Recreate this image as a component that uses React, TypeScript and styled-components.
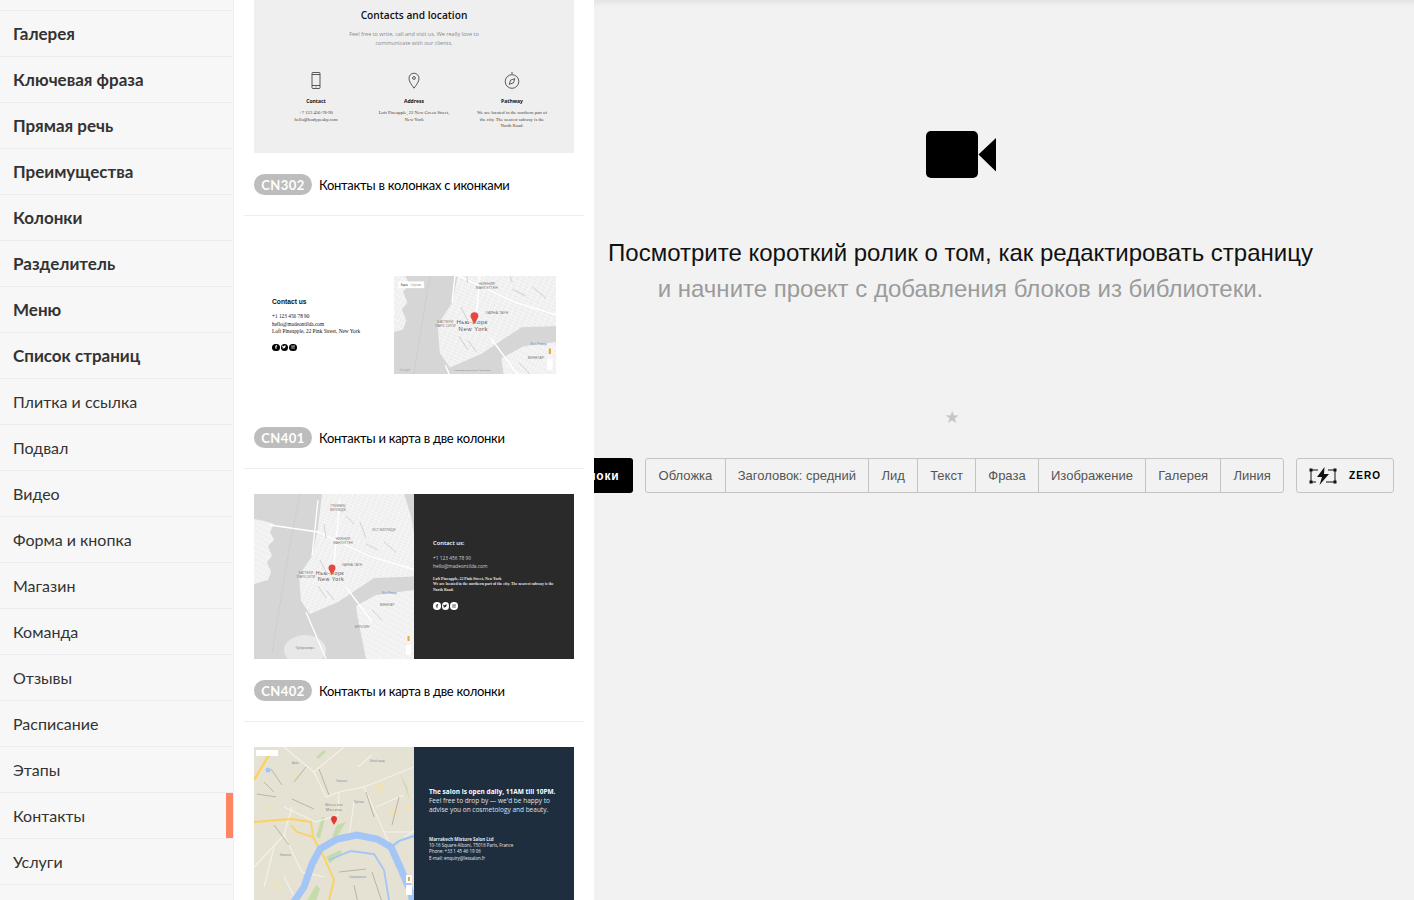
import * as React from "react";
import styled, { createGlobalStyle } from "styled-components";
import { FaFacebookF, FaTwitter, FaInstagram } from "react-icons/fa";

const futura = `"Lato", "Noto Sans", sans-serif`;
const arial = `"Liberation Sans", Arial, sans-serif`;
const serif = `"Liberation Serif", Georgia, serif`;
const openSans = `"Open Sans", sans-serif`;

const GlobalStyle = createGlobalStyle`
  html, body {
    margin: 0;
    height: 100%;
    overflow: hidden;
  }
  #root {
    height: 100%;
  }
`;

const Page = styled.div`
  display: flex;
  height: 900px;
  overflow: hidden;
  background: #fff;
`;

const Sidebar = styled.nav`
  width: 233px;
  flex-shrink: 0;
  background: #f7f7f7;
  border-right: 1px solid #eeeeee;
`;

const SidebarTop = styled.div`
  height: 10px;
  border-bottom: 1px solid #ececec;
`;

const SidebarRow = styled.div<{ $bold?: boolean; $active?: boolean }>`
  position: relative;
  box-sizing: border-box;
  height: 46px;
  display: flex;
  align-items: center;
  padding-left: 13px;
  border-bottom: 1px solid #ececec;
  font-family: ${futura};
  font-size: ${(p) => (p.$bold ? "17px" : "16px")};
  font-weight: ${(p) => (p.$bold ? 700 : 400)};
  color: #333;
  ${(p) =>
    p.$active &&
    `&::after {
      content: "";
      position: absolute;
      top: 0;
      right: 0;
      bottom: 0;
      width: 7px;
      background: #ff8562;
    }`}
`;

const Library = styled.main`
  width: 360px;
  flex-shrink: 0;
  box-sizing: border-box;
  padding: 0 10px;
  background: #fff;
`;

const Card = styled.section<{ $first?: boolean }>`
  padding: ${(p) => (p.$first ? "0" : "25px")} 10px 20px;
  border-bottom: 1px solid #eeeeee;
`;

const Caption = styled.div`
  display: flex;
  align-items: center;
  gap: 7px;
  margin-top: 21px;
  height: 21px;
`;

const Pill = styled.span`
  width: 58px;
  height: 21px;
  border-radius: 11px;
  background: #bdbdbd;
  color: #fff;
  font-family: ${futura};
  font-size: 13px;
  font-weight: 700;
  letter-spacing: 0.5px;
  display: flex;
  align-items: center;
  justify-content: center;
`;

const CaptionText = styled.span`
  font-family: ${futura};
  font-size: 13px;
  letter-spacing: -0.27px;
  color: #000;
`;

const ContactsPreview = styled.div`
  box-sizing: border-box;
  height: 153px;
  background: #efefef;
  padding-top: 9px;
  text-align: center;
  color: #111;
`;

const PreviewTitle = styled.div`
  font-family: ${openSans};
  font-size: 10.2px;
  font-weight: 600;
  line-height: 12px;
`;

const PreviewLead = styled.div`
  margin-top: 9px;
  font-family: ${openSans};
  font-size: 5.5px;
  line-height: 9px;
  color: #8a8a8a;
`;

const IconColumns = styled.div`
  display: grid;
  grid-template-columns: repeat(3, 98px);
  justify-content: center;
  margin-top: 24px;
`;

const IconColumn = styled.div`
  display: flex;
  flex-direction: column;
  align-items: center;
`;

const ColumnTitle = styled.div`
  margin-top: 8px;
  font-family: ${openSans};
  font-size: 5px;
  font-weight: 700;
  line-height: 8px;
`;

const ColumnText = styled.div`
  margin-top: 5px;
  width: 78px;
  font-family: ${serif};
  font-size: 4.7px;
  line-height: 6.7px;
  color: #444;
`;

const SplitPreview = styled.div<{ $bg?: string }>`
  height: 165px;
  display: grid;
  grid-template-columns: 160px 160px;
  background: ${(p) => p.$bg || "#fff"};
  overflow: hidden;
`;

const MapPane = styled.div`
  height: 165px;
`;

const TwoColPreview = styled.div`
  height: 165px;
  display: flex;
  align-items: center;
  justify-content: space-between;
  padding: 2px 18px 0;
  box-sizing: border-box;
`;

const SmallMap = styled.div`
  width: 162px;
  height: 98px;
  flex-shrink: 0;
`;

const InfoBlock = styled.div`
  color: #111;
`;

const InfoTitle = styled.div`
  font-family: ${arial};
  font-size: 6.7px;
  font-weight: 700;
  line-height: 8px;
`;

const InfoLine = styled.div`
  margin-top: 7px;
  font-family: ${serif};
  font-size: 5.3px;
  line-height: 7.5px;
`;

const Socials = styled.div<{ $light?: boolean }>`
  display: flex;
  gap: 1px;
  margin-top: 8px;
  & > span {
    width: 7.5px;
    height: 7.5px;
    border-radius: 50%;
    background: ${(p) => (p.$light ? "#fff" : "#000")};
    color: ${(p) => (p.$light ? "#2a2a2a" : "#fff")};
    display: flex;
    align-items: center;
    justify-content: center;
    font-size: 4px;
  }
`;

const DarkPane = styled.div`
  padding: 45px 19px 0;
  color: #fff;
`;

const DarkTitle = styled.div`
  font-family: ${openSans};
  font-size: 5.8px;
  font-weight: 600;
  line-height: 8px;
`;

const DarkSans = styled.div`
  margin-top: 8px;
  font-family: ${openSans};
  font-size: 4.8px;
  line-height: 7.6px;
  color: #cfcfcf;
`;

const DarkSerif = styled.div`
  margin-top: 6.5px;
  font-family: ${serif};
  font-size: 3.9px;
  font-weight: 700;
  line-height: 5.8px;
  color: #e4e4e4;
`;

const NavyPane = styled.div`
  padding: 40px 15px 0 15px;
  color: #fff;
`;

const NavyLead = styled.div`
  font-family: ${openSans};
  font-size: 6.5px;
  line-height: 9.2px;
  color: #dfe3e8;
  & > b {
    color: #fff;
  }
`;

const NavySmall = styled.div`
  margin-top: 21px;
  font-family: ${openSans};
  font-size: 4.45px;
  line-height: 6.3px;
  color: #e4e7ea;
`;

const Workspace = styled.section`
  flex: 1;
  min-width: 0;
  display: flex;
  flex-direction: column;
  overflow: hidden;
  background: #f2f2f2;
  box-shadow: inset 0 10px 10px -10px rgba(0, 0, 0, 0.12);
`;

const Hero = styled.div`
  display: flex;
  flex-direction: column;
  align-items: center;
  padding: 131px 87px 0 0;
`;

const HeroTitle = styled.div`
  margin-top: 57px;
  font-family: ${arial};
  font-size: 24px;
  line-height: 36px;
  color: #111;
  white-space: nowrap;
  text-align: center;
`;

const HeroSub = styled.div`
  font-family: ${arial};
  font-size: 24px;
  line-height: 36px;
  color: #9b9b9b;
  white-space: nowrap;
  text-align: center;
`;

const Star = styled.div`
  margin: 98px 17px 0 0;
  height: 24px;
  font-family: "DejaVu Sans", sans-serif;
  font-size: 17px;
  line-height: 24px;
  color: #c6c6c6;
`;

const Toolbar = styled.div`
  display: flex;
  justify-content: flex-end;
  gap: 12px;
  margin-top: 29px;
  padding-right: 20px;
  height: 35px;
`;

const AllBlocks = styled.div`
  flex-shrink: 0;
  display: flex;
  align-items: center;
  padding: 0 14px;
  background: #000;
  border-radius: 3px;
  color: #fff;
  font-family: ${arial};
  font-size: 12px;
  font-weight: 700;
  letter-spacing: 0.8px;
  white-space: nowrap;
`;

const Segments = styled.div`
  flex-shrink: 0;
  display: flex;
  border: 1px solid #c4c4c4;
  border-radius: 3px;
`;

const Segment = styled.div`
  display: flex;
  align-items: center;
  padding: 0 12.2px;
  border-left: 1px solid #c4c4c4;
  font-family: ${arial};
  font-size: 13px;
  color: #555;
  white-space: nowrap;
  &:first-child {
    border-left: 0;
  }
`;

const ZeroButton = styled.div`
  flex-shrink: 0;
  box-sizing: border-box;
  width: 98px;
  display: flex;
  align-items: center;
  gap: 12px;
  padding-left: 12px;
  border: 1px solid #c4c4c4;
  border-radius: 3px;
  color: #000;
  font-family: ${arial};
  font-size: 10px;
  font-weight: 700;
  letter-spacing: 1.1px;
`;

const sidebarItems = [
  { name: "Галерея", bold: true },
  { name: "Ключевая фраза", bold: true },
  { name: "Прямая речь", bold: true },
  { name: "Преимущества", bold: true },
  { name: "Колонки", bold: true },
  { name: "Разделитель", bold: true },
  { name: "Меню", bold: true },
  { name: "Список страниц", bold: true },
  { name: "Плитка и ссылка" },
  { name: "Подвал" },
  { name: "Видео" },
  { name: "Форма и кнопка" },
  { name: "Магазин" },
  { name: "Команда" },
  { name: "Отзывы" },
  { name: "Расписание" },
  { name: "Этапы" },
  { name: "Контакты", active: true },
  { name: "Услуги" },
];

const segments = [
  "Обложка",
  "Заголовок: средний",
  "Лид",
  "Текст",
  "Фраза",
  "Изображение",
  "Галерея",
  "Линия",
];

const nycLabels = [
  { x: 84, y: 13, text: "ГРИНВИЧ" },
  { x: 84, y: 17, text: "ВИЛЛЕДЖ" },
  { x: 130, y: 37, text: "ИСТ-ВИЛЛЕДЖ" },
  { x: 89, y: 46, text: "НИЖНИЙ" },
  { x: 89, y: 50, text: "МАНХЭТТЕН" },
  { x: 98, y: 72, text: "ХАЙНА-ТАУН" },
  { x: 52, y: 80, text: "БАТТЕРИ" },
  { x: 52, y: 84, text: "ПАРК-СИТИ" },
  { x: 133, y: 112, text: "ВИНЕГАР" },
  { x: 108, y: 134, text: "БРУКЛИН" },
  { x: 51, y: 155, text: "Губернаторс" },
];

const PhoneIcon = () => (
  <svg width="16" height="17" viewBox="0 0 16 17" fill="none" stroke="#333" strokeWidth="0.8">
    <rect x="4" y="0.5" width="8" height="16" rx="0.8" />
    <path d="M4 2.5h8M4 13.5h8M7.5 15h1" />
  </svg>
);

const PinIcon = () => (
  <svg width="16" height="17" viewBox="0 0 16 17" fill="none" stroke="#333" strokeWidth="0.8">
    <path d="M8 16.2C5.5 12.5 3 10 3 6.2a5 5 0 0 1 10 0C13 10 10.500 12.500 8 16.200Z" />
    <circle cx="8" cy="6" r="1.400" />
  </svg>
);

const CompassIcon = () => (
  <svg width="16" height="17" viewBox="0 0 16 17" fill="none" stroke="#333" strokeWidth="0.8">
    <circle cx="8" cy="9.500" r="6.800" />
    <path d="M7 1h2M10.800 6.700 9.400 10.900 5.200 12.300 6.600 8.100Z" />
  </svg>
);

const SocialIcons = ({ light }: { light?: boolean }) => (
  <Socials $light={light}>
    <span>
      <FaFacebookF />
    </span>
    <span>
      <FaTwitter />
    </span>
    <span>
      <FaInstagram />
    </span>
  </Socials>
);

const NycMap = ({
  id,
  box,
  controls,
}: {
  id: string;
  box: [number, number, number, number];
  controls?: boolean;
}) => {
  const [vx, vy, vw, vh] = box;
  const labels = nycLabels.filter(
    (l) => l.x - 12 > vx && l.x + 12 < vx + vw && l.y - 4 > vy && l.y + 1 < vy + vh
  );
  return (
    <svg
      width="100%"
      height="100%"
      viewBox={box.join(" ")}
      preserveAspectRatio="xMidYMid slice"
      style={{ display: "block" }}
    >
      <defs>
        <pattern
          id={`${id}-a`}
          width="5"
          height="3"
          patternUnits="userSpaceOnUse"
          patternTransform="rotate(24)"
        >
          <rect width="5" height="3" fill="#eeeeee" />
          <path d="M0 0H5M0 0V3" stroke="#fff" strokeWidth="0.8" />
        </pattern>
        <pattern
          id={`${id}-b`}
          width="5"
          height="3"
          patternUnits="userSpaceOnUse"
          patternTransform="rotate(-62)"
        >
          <rect width="5" height="3" fill="#efefef" />
          <path d="M0 0H5M0 0V3" stroke="#fff" strokeWidth="0.8" />
        </pattern>
      </defs>
      <rect x="-20" y="-20" width="220" height="220" fill="#d6d6d6" />
      <path
        d="M0 25 10 27 20 30 16 38 20 46 14 52 18 62 13 68 17 78 14 86 0 90Z"
        fill={`url(#${id}-b)`}
      />
      <path
        d="M68 0H150L157 22 160 40H175V82L120 84 96 100 84 108 56 120 47 107 45 82 58 62 64 34Z"
        fill={`url(#${id}-a)`}
      />
      <path
        d="M102 112 122 101 160 96H175V170H113L108 145 104 125Z"
        fill={`url(#${id}-b)`}
      />
      <ellipse cx="51" cy="156" rx="21" ry="15" fill="#e8e8e8" />
      <path
        d="M16 31 64 38 115 62 175 80M52 118 72 165M92 93 118 128M64 6 58 62M86 6 80 70"
        fill="none"
        stroke="#fff"
        strokeWidth="1.300"
      />
      <path
        d="M70 30 72 44M92 22 100 30M106 28 112 44M66 66 72 78M64 92 72 104M72 96 80 106M112 50 124 56M130 48 142 58M118 116 128 126"
        fill="none"
        stroke="#c4c4c4"
        strokeWidth="0.700"
      />
      <path
        d="M46 0 36 50 18 160"
        fill="none"
        stroke="#b8b8b8"
        strokeWidth="0.400"
        strokeDasharray="2 1"
      />
      <g fill="#7b7b7b" fontFamily={arial} fontSize="3.200" textAnchor="middle">
        {labels.map((l) => (
          <text key={l.text} x={l.x} y={l.y}>
            {l.text}
          </text>
        ))}
      </g>
      <g fill="#555" fontFamily={arial} fontSize="5.300" textAnchor="middle" letterSpacing="0.500">
        <text x="76" y="81">Нью-Йорк</text>
        <text x="77" y="87">New York</text>
      </g>
      <text x="128" y="100" fill="#6d8fc4" fontFamily={arial} fontSize="3">Ист-Ривер</text>
      <path d="M78 81C76 77 74.500 76 74.500 74A3.500 3.500 0 0 1 81.500 74C81.500 76 80 77 78 81Z" fill="#e8473f" />
      {controls && (
        <g>
          <rect x="10" y="43" width="23" height="6" fill="#fff" />
          <text x="12" y="47" fill="#333" fontFamily={arial} fontSize="2.400">Карта</text>
          <text x="21" y="47" fill="#888" fontFamily={arial} fontSize="2.400">Спутник</text>
          <text x="60" y="123.500" fill="#777" fontFamily={arial} fontSize="1.700">
            Картографические данные © 2016 Google
          </text>
          <text x="11" y="123.500" fill="#aaa" fontFamily={arial} fontSize="3">Google</text>
        </g>
      )}
      <rect x={vx + vw - 8} y={vy + vh - 24} width="5" height="8" fill="#f5f5f5" />
      <rect x={vx + vw - 6.5} y={vy + vh - 23} width="2" height="5" fill="#e2a93b" />
      <rect x={vx + vw - 8} y={vy + vh - 14} width="5" height="10" fill="#fff" />
    </svg>
  );
};

const MoscowMap = () => (
  <svg
    width="100%"
    height="100%"
    viewBox="0 0 160 165"
    preserveAspectRatio="xMidYMin slice"
    style={{ display: "block" }}
  >
    <rect width="160" height="165" fill="#e5e1d3" />
    <g fill="#c6dbaa">
      <path d="M62 10 70 3 72 5 64 12Z" />
      <path d="M68 70 71 71 66 91 62 90Z" />
      <path d="M83 78 92 75 84 88 78 90Z" />
      <path d="M72 110 86 103 88 106 76 116Z" />
      <path d="M47 165 62 138 66 142 58 165Z" />
      <path d="M145 25 153 40 156 56 152 42Z" />
    </g>
    <g fill="#ece2bd">
      <rect x="122" y="37" width="8" height="7" />
      <rect x="150" y="58" width="8" height="5" />
      <rect x="136" y="62" width="7" height="6" />
      <rect x="40" y="28" width="6" height="5" />
      <rect x="14" y="58" width="6" height="4" />
      <rect x="20" y="135" width="6" height="5" />
    </g>
    <g fill="none" stroke="#f4f2ea" strokeWidth="1.100">
      <path d="M30 0 60 25 72 50 85 45 110 40 130 85 160 85" />
      <path d="M60 25 90 0M85 45 84 68 62 75 30 60M110 40 160 20" />
      <path d="M38 60 30 88 48 125 70 130M95 90 100 55M0 120 30 88" />
      <path d="M130 85 135 96M150 90 160 84M104 20 118 8M122 60 150 48M20 100 10 140M30 130 46 160" />
    </g>
    <g fill="none" stroke="#a9a08b" strokeWidth="0.700">
      <path d="M17 22 28 38M10 35 20 45M3 47 22 50M40 35 52 20M38 52 60 62M65 22 75 48M112 45 120 70M145 50 138 78" />
      <path d="M118 125 128 155M100 138 106 165M85 125 112 122M20 78 35 98" />
    </g>
    <g fill="none" stroke="#fbd35a" strokeWidth="1.800" strokeLinejoin="round">
      <path d="M0 75 37 72 57 75 59 90 70 110 80 133 72 165" />
      <path d="M37 78 43 85 59 90" />
      <path d="M15 8 0 33" strokeWidth="2.400" />
    </g>
    <path
      d="M33 165 50 140 58 117 66 102 83 92 103 88 123 92 137 100 146 120 157 146 160 165"
      fill="none"
      stroke="#a3c6f6"
      strokeWidth="7"
    />
    <path d="M137 100 145 94 160 89" fill="none" stroke="#a3c6f6" strokeWidth="2.200" />
    <path d="M75 113 97 104 120 107 130 123 137 165" fill="none" stroke="#a3c6f6" strokeWidth="1.800" />
    <circle cx="14" cy="23" r="2.500" fill="#a3c6f6" />
    <g fill="#7d92a8" fontFamily={arial} fontSize="2.600">
      <text x="38" y="17">Арбат</text>
      <text x="116" y="15">Китай-город</text>
      <text x="82" y="35">Тверская</text>
      <text x="100" y="56">Лубянка</text>
      <text x="26" y="109">Киевская</text>
      <text x="95" y="131">Серпуховская</text>
    </g>
    <g fill="#8b8676" fontFamily={arial} fontSize="4" textAnchor="middle" letterSpacing="0.500">
      <text x="80" y="59">Moscow</text>
      <text x="80" y="64">Москва</text>
    </g>
    <path d="M80 78C78.500 75 77 74 77 72A3 3 0 0 1 83 72C83 74 81.500 75 80 78Z" fill="#e3382f" />
    <rect x="2" y="3" width="22" height="6" fill="#fff" />
    <rect x="152" y="128" width="6" height="8" fill="#fff" />
    <rect x="154" y="130" width="2" height="4" fill="#e2a93b" />
    <rect x="152" y="138" width="6" height="10" fill="#fff" />
  </svg>
);

const ZeroIcon = () => (
  <svg width="28" height="18" viewBox="0 0 28 18" style={{ flexShrink: 0 }}>
    <path d="M2 3V15M26 3V15M2 3H9M2 15H7M19 3H26M17 15H26" fill="none" stroke="#111" strokeWidth="1" />
    <g fill="#111">
      <rect x="0.500" y="1.500" width="3" height="3" />
      <rect x="24.500" y="1.500" width="3" height="3" />
      <rect x="0.500" y="13.500" width="3" height="3" />
      <rect x="24.500" y="13.500" width="3" height="3" />
    </g>
    <path d="M15.500 0 8 10H13L10.500 18 20 7H15Z" fill="#111" />
  </svg>
);

const App = () => (
  <Page>
    <GlobalStyle />
    <Sidebar>
      <SidebarTop />
      {sidebarItems.map((item) => (
        <SidebarRow key={item.name} $bold={item.bold} $active={item.active}>
          {item.name}
        </SidebarRow>
      ))}
    </Sidebar>
    <Library>
      <Card $first>
        <ContactsPreview>
          <PreviewTitle>Contacts and location</PreviewTitle>
          <PreviewLead>
            Feel free to write, call and visit us. We really love to
            <br />
            communicate with our clients.
          </PreviewLead>
          <IconColumns>
            <IconColumn>
              <PhoneIcon />
              <ColumnTitle>Contact</ColumnTitle>
              <ColumnText>
                +7 123 456-78-90
                <br />
                hello@bodypeaky.com
              </ColumnText>
            </IconColumn>
            <IconColumn>
              <PinIcon />
              <ColumnTitle>Address</ColumnTitle>
              <ColumnText>Loft Pineapple, 22 New Green Street, New York</ColumnText>
            </IconColumn>
            <IconColumn>
              <CompassIcon />
              <ColumnTitle>Pathway</ColumnTitle>
              <ColumnText>
                We are located in the northern part of
                <br />
                the city. The nearest subway is the
                <br />
                North Road.
              </ColumnText>
            </IconColumn>
          </IconColumns>
        </ContactsPreview>
        <Caption>
          <Pill>CN302</Pill>
          <CaptionText>Контакты в колонках с иконками</CaptionText>
        </Caption>
      </Card>
      <Card>
        <TwoColPreview>
          <InfoBlock>
            <InfoTitle>Contact us</InfoTitle>
            <InfoLine>
              +1 123 456 78 90
              <br />
              hello@madeontilda.com
              <br />
              Loft Pineapple, 22 Pink Street, New York
            </InfoLine>
            <SocialIcons />
          </InfoBlock>
          <SmallMap>
            <NycMap id="nyc-small" box={[6, 38, 145, 88]} controls />
          </SmallMap>
        </TwoColPreview>
        <Caption>
          <Pill>CN401</Pill>
          <CaptionText>Контакты и карта в две колонки</CaptionText>
        </Caption>
      </Card>
      <Card>
        <SplitPreview $bg="#2a2a2a">
          <MapPane>
            <NycMap id="nyc-large" box={[0, 0, 160, 165]} />
          </MapPane>
          <DarkPane>
            <DarkTitle>Contact us:</DarkTitle>
            <DarkSans>
              +1 123 456 78 90
              <br />
              hello@madeontilda.com
            </DarkSans>
            <DarkSerif>
              Loft Pineapple, 22 Pink Street, New York
              <br />
              We are located in the northern part of the city. The nearest subway is the North Road.
            </DarkSerif>
            <SocialIcons light />
          </DarkPane>
        </SplitPreview>
        <Caption>
          <Pill>CN402</Pill>
          <CaptionText>Контакты и карта в две колонки</CaptionText>
        </Caption>
      </Card>
      <Card>
        <SplitPreview $bg="#1f2e3f">
          <MapPane>
            <MoscowMap />
          </MapPane>
          <NavyPane>
            <NavyLead>
              <b>The salon is open daily, 11AM till 10PM.</b>
              <br />
              Feel free to drop by — we'd be happy to advise you on cosmetology and beauty.
            </NavyLead>
            <NavySmall>
              <b>Marrakech Mixture Salon Ltd</b>
              <br />
              10-16 Square Alboni, 75016 Paris, France
              <br />
              Phone: +33 1 45 46 19 06
              <br />
              E-mail: enquiry@lessalon.fr
            </NavySmall>
          </NavyPane>
        </SplitPreview>
      </Card>
    </Library>
    <Workspace>
      <Hero>
        <svg width="70" height="47" viewBox="0 0 70 47">
          <rect width="52" height="47" rx="5" fill="#000" />
          <path d="M52.500 23.500 70 7V40.500Z" fill="#000" />
        </svg>
        <HeroTitle>Посмотрите короткий ролик о том, как редактировать страницу</HeroTitle>
        <HeroSub>и начните проект с добавления блоков из библиотеки.</HeroSub>
        <Star>★</Star>
      </Hero>
      <Toolbar>
        <AllBlocks>Все блоки</AllBlocks>
        <Segments>
          {segments.map((s) => (
            <Segment key={s}>{s}</Segment>
          ))}
        </Segments>
        <ZeroButton>
          <ZeroIcon />
          ZERO
        </ZeroButton>
      </Toolbar>
    </Workspace>
  </Page>
);

export default App;
